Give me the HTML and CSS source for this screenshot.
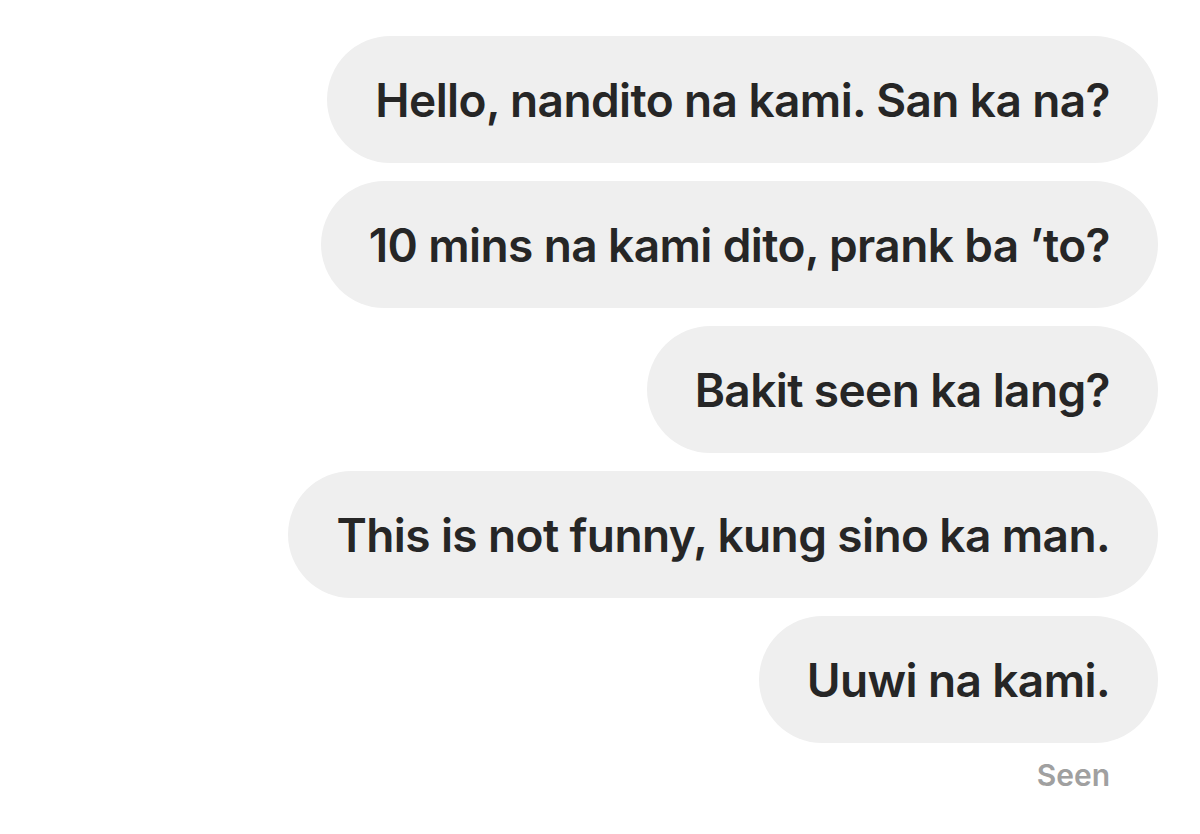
FILE: index.html
```html
<!DOCTYPE html>
<html>
<head>
<meta charset="utf-8">
<link rel="stylesheet" href="styles.css">
</head>
<body>
<div class="thread">
  <div class="bubble">Hello, nandito na kami. San ka na?</div>
  <div class="bubble">10 mins na kami dito, prank ba ’to?</div>
  <div class="bubble">Bakit seen ka lang?</div>
  <div class="bubble">This is not funny, kung sino ka man.</div>
  <div class="bubble">Uuwi na kami.</div>
  <div class="seen">Seen</div>
</div>
</body>
</html>
```
FILE: styles.css
```css
html, body {
  margin: 0;
  padding: 0;
  background: #ffffff;
}
.thread {
  display: flex;
  flex-direction: column;
  align-items: flex-end;
  gap: 18px;
  padding: 36px 42px 0 0;
  font-family: Inter, "Noto Sans", sans-serif;
}
.bubble {
  background: #efefef;
  color: #262626;
  height: 127px;
  border-radius: 64px;
  padding: 0 48px;
  display: flex;
  align-items: center;
  font-size: 46px;
  font-weight: 600;
  letter-spacing: -0.6px;
  white-space: nowrap;
}
.seen {
  color: #a0a0a0;
  font-size: 30px;
  font-weight: 600;
  margin-top: -4px;
  padding-right: 48px;
}
```
